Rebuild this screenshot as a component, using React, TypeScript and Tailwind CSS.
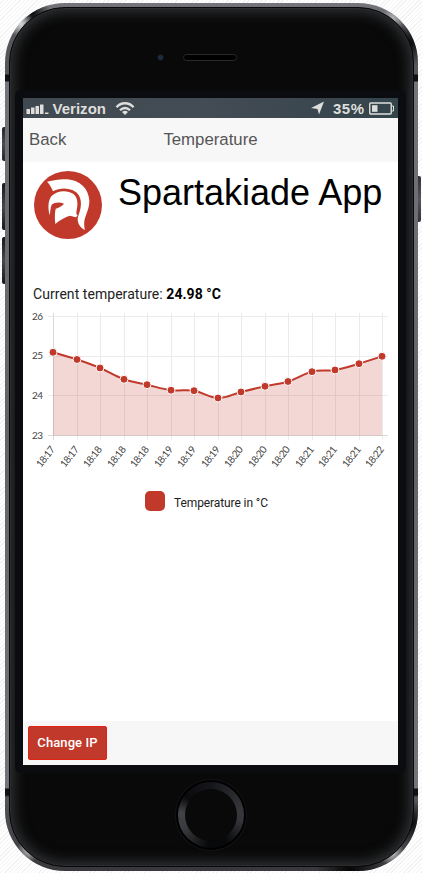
const readings = [
  { x: 53, y: 352.3, t: "18:17" }, { x: 77, y: 359.5, t: "18:17" },
  { x: 100, y: 368, t: "18:18" }, { x: 124, y: 379.3, t: "18:18" },
  { x: 147, y: 384.7, t: "18:18" }, { x: 171, y: 390.2, t: "18:19" },
  { x: 194, y: 390.7, t: "18:19" }, { x: 218, y: 398, t: "18:19" },
  { x: 241, y: 392, t: "18:20" }, { x: 265, y: 386.3, t: "18:20" },
  { x: 288, y: 381.5, t: "18:20" }, { x: 312, y: 371.7, t: "18:21" },
  { x: 335, y: 370, t: "18:21" }, { x: 359, y: 363.7, t: "18:21" },
  { x: 382, y: 356.3, t: "18:22" },
];

// Smooth line through the readings, one cubic segment per interval.
function linePath() {
  let d = `M${readings[0].x} ${readings[0].y}`;
  for (let i = 0; i < readings.length - 1; i++) {
    const p0 = readings[Math.max(0, i - 1)];
    const p1 = readings[i];
    const p2 = readings[i + 1];
    const p3 = readings[Math.min(readings.length - 1, i + 2)];
    const k = 0.2;
    d += `C${p1.x + (p2.x - p0.x) * k} ${p1.y + (p2.y - p0.y) * k} ${p2.x - (p3.x - p1.x) * k} ${p2.y - (p3.y - p1.y) * k} ${p2.x} ${p2.y}`;
  }
  return d;
}

function TemperatureChart() {
  const line = linePath();
  return (
    <svg className="block h-[172px] w-[375px]" viewBox="23 308 375 172">
      {[316.5, 356.5, 395.5].map((y) => (
        <path key={y} d={`M48 ${y}H388`} stroke="#ebebeb" />
      ))}
      {readings.map((p, i) => (
        <path key={i} d={`M${p.x + 0.5} 313V440`} stroke={i ? "#ebebeb" : "#d9d9d9"} />
      ))}
      <path d="M48 435.5H388" stroke="#d9d9d9" />
      <path d={`${line}V435.5H53Z`} fill="#c0392b" fillOpacity="0.2" />
      <path d={line} fill="none" stroke="#c0392b" strokeWidth="2" />
      {readings.map((p, i) => (
        <circle key={i} cx={p.x} cy={p.y} r="4" fill="#c0392b" stroke="#fff" />
      ))}
      <g className="font-[Lato,sans-serif] text-[10px]" fill="#444">
        {[26, 25, 24, 23].map((n, i) => (
          <text key={n} x="43" y={319.5 + i * 39.8} textAnchor="end" textLength="11">{n}</text>
        ))}
        {readings.map((p, i) => (
          <text key={i} textAnchor="end" textLength="23.500" transform={`translate(${p.x + 2.5} 449.5) rotate(-52)`}>{p.t}</text>
        ))}
      </g>
    </svg>
  );
}

function Logo() {
  return (
    <svg className="h-[68px] w-[68px] shrink-0" viewBox="12 18 204 204">
      <circle cx="114" cy="120" r="102" fill="#c0392b" />
      <path fill="#fff" d="M51 50C75 44 95 41 112 43C150 46 175 70 178 106C179 132 166 150 163 168C162 180 163 188 165 195C152 189 144 177 143 164C143 153 150 143 152 126C156 101 146 83 127 75C108 68 88 69 69 79C65 68 59 58 51 50Z" />
      <path fill="#fff" d="M59 151C54 132 53 108 64 94C79 76 112 74 129 86C142 95 145 112 140 136C138 143 139 149 143 152L137 157L120 152C106 156 89 165 76 177C74 160 74 145 77 131C86 128 96 123 102 116C90 111 74 111 65 119C61 129 61 140 59 151Z" />
    </svg>
  );
}

function StatusBar() {
  return (
    <div className="flex h-5 items-center bg-gradient-to-r from-[#414950] via-[#434b55] to-[#34444b] pr-1 pl-[3px] font-['Liberation_Sans',Arial,sans-serif] text-[15px] leading-5 font-bold text-[#dededc]">
      <svg className="h-[11px] w-[23px] shrink-0" viewBox="0 0 23 11" fill="currentColor">
        <path d="M0.500 6h3.500v5H0.500zM5 4.500h3.500V11H5zM9.500 3H13v8H9.500zM14 1.500h3.500V11H14zM19 9.500h3.500V11H19z" />
      </svg>
      <svg className="ml-[3px] h-5 w-[55px] shrink-0" viewBox="0 0 55 20" fill="currentColor">
        <text x="0.500" y="16" textLength="53.500">Verizon</text>
      </svg>
      <svg className="ml-2 h-[15px] w-5" viewBox="0 0 20 15" fill="none" stroke="currentColor" strokeWidth="2.300">
        <path d="M1.500 6.200C6 0.900 14 0.900 18.500 6.200M5 9.300C8 6.200 12 6.200 15 9.300" />
        <path d="M7 11Q10 8.600 13 11L10 14Z" fill="currentColor" stroke="none" />
      </svg>
      <svg className="ml-auto h-[14px] w-[13px]" viewBox="0 0 13 14" fill="currentColor">
        <path d="M13 0.500L8 13.500L6.500 8L0 7Z" />
      </svg>
      <svg className="ml-[9px] h-5 w-8" viewBox="0 0 32 20" fill="currentColor">
        <text x="0" y="16" textLength="31">35%</text>
      </svg>
      <svg className="ml-1 h-[13px] w-[25px]" viewBox="0 0 25 13">
        <rect x="0.750" y="1" width="21.500" height="11" rx="1" fill="none" stroke="currentColor" strokeWidth="1.400" />
        <path d="M3 3.200H8.500V9.800H3Z" fill="currentColor" />
        <path d="M22.500 4h2v5h-2" fill="none" stroke="currentColor" />
      </svg>
    </div>
  );
}

function Screen() {
  return (
    <div className="flex h-[667px] w-[375px] flex-col bg-white font-['Liberation_Sans',Arial,sans-serif]">
      <StatusBar />
      <nav className="grid h-11 grid-cols-[1fr_auto_1fr] items-center bg-[#f7f7f8] px-1.5 text-[16.800px] text-[#555]">
        <span>Back</span>
        <span>Temperature</span>
      </nav>
      <main className="flex grow flex-col">
        <header className="flex h-[123px] items-start pt-[9px] pl-[11px]">
          <Logo />
          <h1 className="ml-4 text-[36px] leading-[44px] whitespace-nowrap text-black">Spartakiade App</h1>
        </header>
        <p className="h-[23px] pl-2.5 font-[Roboto,sans-serif] text-[14px] leading-[18px] tracking-[0.050px] text-[#222]">
          Current temperature: <b className="font-bold text-black">24.98 °C</b>
        </p>
        <TemperatureChart />
        <div className="mt-[11px] flex h-5 items-center pl-[122px] font-[Roboto,sans-serif] text-[12px] tracking-[-0.100px] text-[#222]">
          <span className="mr-[9px] h-5 w-5 rounded-[5px] bg-[#c0392b]" />
          <span className="pt-1">Temperature in °C</span>
        </div>
      </main>
      <footer className="flex h-11 items-center bg-[#f7f7f7] px-[5px]">
        <button className="h-[34px] w-[79px] rounded-xs border border-[#e42112] bg-[#c0392b] pb-px font-[Roboto,sans-serif] text-[13px] font-medium tracking-[0.100px] text-white">Change IP</button>
      </footer>
    </div>
  );
}

export default function App() {
  return (
    <div className="relative h-[873px] w-[422px] overflow-hidden bg-white bg-[repeating-linear-gradient(135deg,#fff_0px,#fff_2px,#f2f2f2_2px,#f2f2f2_3px)] pt-[3px] pl-[5px]">
      {/* Side buttons */}
      <div className="absolute top-[127px] left-[2px] h-[34px] w-[4px] rounded-l-xs bg-gradient-to-b from-[#24272a] via-[#4a4e52] to-[#24272a]" />
      <div className="absolute top-[183px] left-[2px] h-[47px] w-[4px] rounded-l-xs bg-gradient-to-b from-[#17191b] via-[#45494c] to-[#17191b]" />
      <div className="absolute top-[237px] left-[2px] h-[47px] w-[4px] rounded-l-xs bg-gradient-to-b from-[#17191b] via-[#45494c] to-[#17191b]" />
      <div className="absolute top-[176px] left-[417px] h-[46px] w-[4px] rounded-r-xs bg-gradient-to-b from-[#303236] via-[#55575c] to-[#303236]" />
      <div className="relative h-[868px] w-[413px] rounded-[60px] bg-[linear-gradient(to_bottom,#75757b_0px,#55565a_30px,#55575b_71px,#101114_72px,#101114_78px,#74757a_79px,#626368_50%,#74757a_785px,#101114_786px,#101114_792px,#55565a_794px,#39373b_868px)] p-[4px]">
        {/* Bright bends in the metal rim */}
        <div className="absolute inset-0 rounded-[60px] bg-[radial-gradient(circle_at_16px_21px,#d8dadb_0px,transparent_13px),radial-gradient(circle_at_27px_10px,#08090a_0px,transparent_18px),radial-gradient(circle_at_388px_15px,#b0b1b3_0px,transparent_12px),radial-gradient(circle_at_405px_40px,#08090a_0px,transparent_22px),radial-gradient(circle_at_24px_847px,#c6c7c8_0px,transparent_12px),radial-gradient(circle_at_386px_849px,#d8dadb_0px,transparent_13px),radial-gradient(circle_at_345px_868px,#050505_0px,transparent_34px),radial-gradient(circle_at_406px_820px,#08090a_0px,transparent_22px)]" />
        <div className="relative flex h-[860px] w-[405px] flex-col items-center rounded-[56px] border border-[#08090a] bg-[#090909] shadow-[inset_0_0_0_1px_#2b2c2e,inset_0_0_13px_4px_#303336]">
          <div className="flex h-[82px] w-full items-center pt-[16px] pl-[147px]">
            <div className="h-[7px] w-[7px] rounded-full border border-[#111318] bg-[#1d2c3e]" />
            <div className="ml-[19px] h-[7px] w-[54px] rounded-full border border-[#292929] bg-black" />
          </div>
          <div className="mr-[2px] rounded-md bg-[#0b0c10] p-2">
            <Screen />
          </div>
          <div className="mt-[7px] mr-px h-[70px] w-[70px] rounded-full border-2 border-black bg-[conic-gradient(#15161b_0deg,#36373a_80deg,#35363a_100deg,#08090a_150deg,#08090a_185deg,#3a3b3e_245deg,#424347_275deg,#0b0b0d_305deg,#15161b_360deg)] p-[7px] shadow-[0_0_2px_#333]">
            <div className="h-full w-full rounded-full bg-[#090909]" />
          </div>
        </div>
      </div>
    </div>
  );
}
